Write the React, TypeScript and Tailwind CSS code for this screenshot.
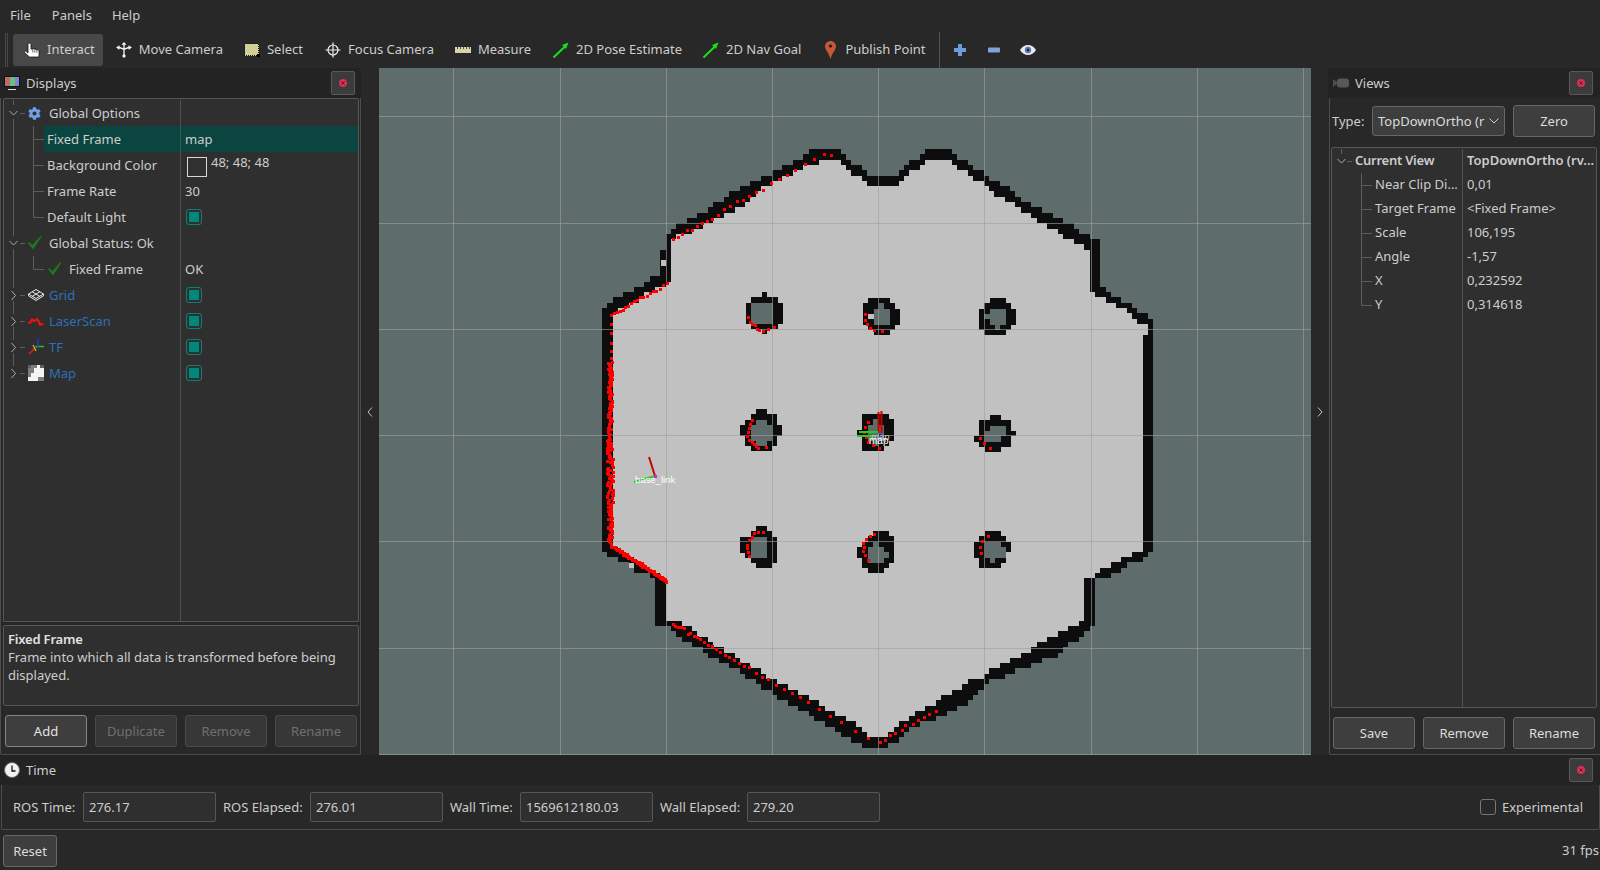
import type { ReactNode } from "react";
import { FaCog } from "react-icons/fa";

type P = [number, number];

// map outline traced from the occupancy grid
const OUTER: P[] = [
  [602, 552], [602, 313], [608, 303], [618, 297], [640, 287], [656, 276], [661, 276], [661, 250], [667, 250], [667, 234], [671, 228],
  [693, 218], [719, 202], [735, 191], [767, 175], [799, 160], [815, 149], [836, 149], [847, 160], [873, 176], [895, 176], [921, 154],
  [932, 149], [948, 149], [979, 170], [990, 181], [1011, 187], [1017, 197], [1038, 208], [1059, 218], [1070, 223], [1085, 234], [1096, 239], [1102, 245],
  [1102, 287], [1107, 293], [1117, 298], [1128, 303], [1133, 309], [1144, 314], [1155, 319],
  [1155, 547], [1149, 553], [1144, 558], [1133, 563], [1123, 568], [1117, 574], [1101, 579], [1096, 579], [1096, 622], [1090, 632],
  [1080, 637], [1059, 654], [1027, 668], [1006, 675], [984, 685], [968, 701], [953, 712], [921, 723], [905, 733], [894, 743], [883, 749],
  [868, 749], [857, 743], [846, 738], [841, 733], [820, 722], [804, 712], [793, 706], [777, 696], [767, 691], [751, 680], [735, 669],
  [714, 659], [703, 653], [698, 647], [687, 643], [676, 637], [671, 627], [661, 627], [655, 621], [655, 578], [640, 573], [623, 563], [613, 558],
];
const INNER: P[] = [
  [613, 543], [613, 315], [640, 298], [661, 287], [671, 282], [671, 239], [682, 235], [719, 217], [741, 207], [767, 186], [810, 165],
  [826, 160], [836, 160], [863, 181], [873, 186], [895, 186], [921, 165], [932, 160], [948, 160], [979, 181], [990, 192], [1011, 202],
  [1033, 218], [1053, 228], [1059, 234], [1070, 239], [1080, 245], [1086, 250], [1091, 250],
  [1091, 293], [1102, 298], [1112, 303], [1128, 313], [1133, 319], [1144, 324], [1149, 329], [1149, 335], [1144, 335], [1144, 548], [1112, 563], [1096, 574], [1085, 579], [1085, 622], [1059, 632], [1032, 648],
  [984, 675], [963, 685], [910, 717], [883, 738], [868, 738], [852, 722], [830, 712], [814, 701], [793, 691], [772, 680], [756, 669],
  [740, 659], [719, 648], [703, 637], [687, 627], [676, 621], [665, 621], [665, 578], [623, 553],
];

const OBSTACLES: { x: number; y: number; rows: string[] }[] = [
  { x: 746, y: 292, rows: ["...#...", ".#####.", "#gggg##", "#gggg##", "#gggg##", "#gggg##", ".#####.", "...#..."] },
  { x: 863, y: 298, rows: [".####..", "###g##.", "##ggg##", "#.ggg##", "##ggg##", ".#####.", "..###.."] },
  { x: 979, y: 298, rows: ["..###..", ".#####.", "##ggg##", "#gggg##", "##ggg##", "###g##.", ".####.."] },
  { x: 740, y: 409, rows: ["...##...", "..#####.", ".##gg##.", "##gggg##", "##gggg##", ".#gggg#.", ".##gg##.", "..####.."] },
  { x: 857, y: 414, rows: [".#####.", ".##g###", ".#ggg##", "##ggg##", ".#ggg##", ".##g##.", ".####.."] },
  { x: 974, y: 415, rows: ["...##...", ".######.", ".##ggg#.", ".#gggg##", "##ggg##.", ".######.", "..###..."] },
  { x: 740, y: 526, rows: ["...##..", "..####.", "##ggg##", "##ggg##", "##ggg##", ".#ggg##", "..#####", "...###."] },
  { x: 857, y: 531, rows: ["...###.", "..#####", ".##g###", "##ggg##", "##gggg#", ".#ggg##", ".#####.", "..###.."] },
  { x: 974, y: 531, rows: ["..###..", ".#####.", "##ggg##", "##gggg#", "##gggg.", ".##g##.", ".####.."] },
];

const CELL = 5.3;

function inside(poly: P[], x: number, y: number) {
  let hit = false;
  for (let i = 0, j = poly.length - 1; i < poly.length; j = i++) {
    const [xi, yi] = poly[i];
    const [xj, yj] = poly[j];
    if (yi > y !== yj > y && x < ((xj - xi) * (y - yi)) / (yj - yi) + xi) hit = !hit;
  }
  return hit;
}

// cell edges come from the index so neighbouring rows never leave a gap
function cell(ox: number, oy: number, i: number, j: number) {
  const l = Math.round(ox + i * CELL);
  const t = Math.round(oy + j * CELL);
  const w = Math.round(ox + (i + 1) * CELL) - l;
  const h = Math.round(oy + (j + 1) * CELL) - t;
  return `M${l} ${t}h${w}v${h}h-${w}z`;
}

function buildMap() {
  let light = "";
  let black = "";
  for (let j = 0; j < 115; j++) {
    for (let i = 0; i < 105; i++) {
      const cx = 602 + (i + 0.5) * CELL;
      const cy = 149 + (j + 0.5) * CELL;
      if (inside(INNER, cx, cy)) light += cell(602, 149, i, j);
      else if (inside(OUTER, cx, cy)) black += cell(602, 149, i, j);
    }
  }
  let holes = "";
  let rims = "";
  for (const o of OBSTACLES) {
    o.rows.forEach((row, r) => {
      row.split("").forEach((c, k) => {
        if (c === "#") rims += cell(o.x, o.y, k, r);
        if (c === "g") holes += cell(o.x, o.y, k, r);
      });
    });
  }
  return { light, black: black + rims, holes };
}

const MAP = buildMap();

// laser hits, read off 3x crops: [crop x, crop y, points]
const HITS: [number, number, number[]][] = [
  [590, 140, [250, 296, 265, 292, 277, 283, 292, 270, 307, 270, 322, 259, 337, 250, 352, 242, 367, 238, 385, 224, 403, 208, 421, 199, 441, 184, 459, 181, 478, 169, 499, 157, 519, 151, 544, 129, 568, 116, 592, 105, 616, 91, 645, 73, 673, 58, 702, 43, 723, 46, 231, 429, 220, 436, 210, 448, 198, 453, 189, 453, 180, 460, 170, 468, 160, 471, 151, 472, 142, 481, 132, 484, 123, 490, 114, 499, 105, 500, 99, 510, 89, 514, 80, 517, 72, 520, 64, 525, 64, 553, 62, 578, 64, 610, 64, 632, 64, 655, 475, 532, 479, 545, 487, 553, 495, 556, 500, 568, 508, 571, 519, 574, 535, 568, 553, 562]],
  [840, 140, [76, 522, 76, 540, 81, 553, 91, 565, 103, 571, 125, 574]],
  [590, 400, [487, 61, 480, 73, 477, 85, 475, 97, 472, 109, 477, 120, 485, 127, 492, 133, 498, 138, 503, 144, 527, 142, 835, 67, 826, 82, 823, 95, 828, 112, 835, 127, 848, 136, 868, 145, 519, 397, 503, 397, 492, 400, 485, 412, 477, 420, 472, 435, 470, 445, 473, 457, 478, 467, 853, 401, 841, 409, 829, 418, 820, 428, 823, 442, 820, 452, 824, 466, 835, 481]],
  [960, 400, [61, 115, 71, 130, 91, 145, 85, 409, 67, 424, 61, 440, 64, 458]],
  [640, 570, [100, 163, 106, 168, 115, 170, 123, 170, 132, 175, 145, 193, 151, 189, 162, 199, 171, 202, 181, 208, 193, 217, 205, 224, 216, 229, 229, 236, 241, 245, 256, 255, 268, 260, 283, 271, 298, 279, 313, 287, 328, 291, 349, 308, 367, 320, 385, 326, 409, 344, 432, 357, 457, 370, 481, 382, 505, 395, 538, 418, 571, 438, 604, 455, 646, 483, 685, 503]],
  [840, 540, [4, 545, 46, 573, 85, 593, 120, 607, 136, 600, 151, 586, 166, 578, 185, 571, 196, 556, 220, 553, 234, 541, 253, 532, 268, 522, 288, 514]],
];

// fixed noise so the scan looks the same on every load
function noise(i: number) {
  const s = Math.sin(i * 12.9898) * 43758.5453;
  return s - Math.floor(s);
}

function hitDots() {
  const out: P[] = [];
  for (const [ox, oy, pts] of HITS) {
    for (let i = 0; i < pts.length; i += 2) out.push([ox + pts[i] / 3, oy + pts[i + 1] / 3]);
  }
  // left wall and lower left corner are dense
  let n = 1;
  for (let y = 362; y < 545; y += 1.1) {
    const spread = y > 440 && y < 505 ? 7 : 4.5;
    out.push([610 + (noise(n++) - 0.5) * spread, y]);
  }
  for (let t = 0; t < 1; t += 0.012) {
    out.push([610 + t * 55.5 + noise(n++) * 1.5, 545 + t * 35 + noise(n++) * 3 - 1]);
  }
  return out;
}

const DOTS = hitDots();
const GRID_X = [453, 560, 666, 772, 878, 984, 1091, 1197, 1303];
const GRID_Y = [116, 223, 329, 435, 541, 648, 754];

function MapView() {
  return (
    <svg viewBox="379 68 932 687" className="block w-full h-full" shapeRendering="crispEdges">
      <rect x="379" y="68" width="932" height="687" fill="#5e6d6b" />
      <path d={MAP.light} fill="#c1c1c1" />
      <path d={MAP.black} fill="#0d0d0d" />
      <path d={MAP.holes} fill="#5e6d6b" />
      <rect x="661" y="260" width="5" height="6" fill="#c1c1c1" />
      <rect x="629" y="563" width="5" height="5" fill="#c1c1c1" />
      {GRID_X.map((x) => (
        <line key={x} x1={x + 0.5} x2={x + 0.5} y1="68" y2="755" stroke="#a0a0a0" strokeOpacity="0.62" />
      ))}
      {GRID_Y.map((y) => (
        <line key={y} y1={y + 0.5} y2={y + 0.5} x1="379" x2="1311" stroke="#a0a0a0" strokeOpacity="0.62" />
      ))}
      {DOTS.map(([x, y], i) => (
        <rect key={i} x={Math.round(x) - 1} y={Math.round(y) - 1} width="3" height="3" fill="#ff0000" />
      ))}
      <g shapeRendering="auto">
        <line x1="649" y1="457" x2="655" y2="476" stroke="#c80000" strokeWidth="2" />
        <line x1="655" y1="476" x2="634" y2="482" stroke="#1fd01f" strokeWidth="2" />
        <rect x="654" y="475" width="3" height="3" fill="#d020d0" />
        <text x="635" y="483" fontSize="9.5" fill="#fff" fontFamily="'Liberation Sans', sans-serif">base_link</text>
        <line x1="878.5" y1="412" x2="878.5" y2="433" stroke="#c80000" strokeWidth="2" />
        <line x1="881.5" y1="411" x2="881.5" y2="433" stroke="#c80000" strokeWidth="2" />
        <line x1="859" y1="432" x2="878" y2="432" stroke="#1fd01f" strokeWidth="2" />
        <line x1="857" y1="436" x2="876" y2="436" stroke="#1fd01f" strokeWidth="2" />
        <rect x="879" y="434" width="3" height="3" fill="#2020e0" />
        <text x="871" y="440" fontSize="9.5" fill="#c8c8c8" fontFamily="'Liberation Sans', sans-serif">map</text>
        <text x="869" y="444" fontSize="10" fill="#fff" fontFamily="'Liberation Sans', sans-serif">map</text>
      </g>
    </svg>
  );
}

function CloseButton() {
  return (
    <div className="w-6 h-6 flex items-center justify-center bg-[#3b3b3b] border border-[#595959] rounded-[2px]">
      <svg width="8" height="8" viewBox="0 0 8 8">
        <circle cx="4" cy="4" r="4" fill="#d9304f" />
        <path d="M2.4 2.4l3.2 3.2M5.6 2.4L2.4 5.6" stroke="#5b1d2a" strokeWidth="1" />
      </svg>
    </div>
  );
}

// Qt draws the label a pixel under the centre of its row
function Txt({ children, className }: { children: ReactNode; className?: string }) {
  return <span className={`pt-[2px] whitespace-nowrap ${className ?? ""}`}>{children}</span>;
}

function TitleBar({ icon, title, className }: { icon: ReactNode; title: string; className?: string }) {
  return (
    <div className={`h-[30px] shrink-0 flex items-center justify-between bg-[#232323] ${className ?? ""}`}>
      <div className="flex items-center">
        {icon}
        <Txt>{title}</Txt>
      </div>
      <div className="mr-[6px]">
        <CloseButton />
      </div>
    </div>
  );
}

function Btn({ children, disabled, w = "w-[82px]", strong }: { children: ReactNode; disabled?: boolean; w?: string; strong?: boolean }) {
  const look = disabled
    ? "bg-[#373737] border-[#4a4a4a] text-[#6f6f6f]"
    : strong
      ? "bg-[#3e3e3e] border-[#858585] text-[#e4e4e4]"
      : "bg-[#3e3e3e] border-[#676767] text-[#dcdcdc]";
  return (
    <div className={`${w} h-8 shrink-0 flex items-center justify-center border rounded-[3px] ${look}`}>
      <Txt>{children}</Txt>
    </div>
  );
}

function Check() {
  return (
    <div className="w-4 h-4 p-[2px] border border-[#0f7f73] rounded-[3px]">
      <div className="w-full h-full bg-[#00897b]" />
    </div>
  );
}

function TopGuide({ open, last, first }: { open?: boolean; last?: boolean; first?: boolean }) {
  return (
    <svg width="24" height="26" viewBox="0 0 24 26" className="shrink-0" fill="none" stroke="#5c5c5c">
      {!first && <path d="M9.5 0V6" />}
      {!last && <path d="M9.5 19V26" />}
      {first && <path d="M9.5 0V5" />}
      <path d="M16 13.5H21" />
      {open ? <path d="M5.5 11l4 4 4-4" stroke="#b0b0b0" /> : <path d="M7.500 9l4 4.500-4 4.500" stroke="#b0b0b0" />}
    </svg>
  );
}

function ChildGuide({ last }: { last?: boolean }) {
  return (
    <svg width="40" height="26" viewBox="0 0 40 26" className="shrink-0" fill="none" stroke="#5c5c5c">
      <path d="M9.5 0V26" />
      <path d={last ? "M29.5 0V13.5H40" : "M29.5 0V26M29.5 13.5H40"} />
    </svg>
  );
}

function Row({ left, right, active }: { left: ReactNode; right?: ReactNode; active?: boolean }) {
  return (
    <div className="flex h-[26px] shrink-0">
      <div className="w-[177px] shrink-0 flex items-center border-r border-[#505050] relative">
        {active && <div className="absolute inset-y-0 left-[40px] right-0 bg-[#0a4540]" />}
        <div className="relative flex items-center">{left}</div>
      </div>
      <div className={`flex-1 flex items-center pl-[4px] ${active ? "bg-[#0a4540]" : ""}`}>{right}</div>
    </div>
  );
}

const GreenTick = () => (
  <svg width="14" height="14" viewBox="0 0 14 14" className="shrink-0">
    <path d="M0 7l1.500-1 2.600 3.200L12.600 0l.9.6L5 13.500z" fill="#1f7a1f" />
  </svg>
);

const GridIcon = () => (
  <svg width="16" height="12" viewBox="0 0 16 12" fill="none" stroke="#ececec" className="shrink-0">
    <path d="M8 0.500l7.500 4.500L8 9.500 0.500 5z M4.200 2.800l7.500 4.500 M11.800 2.800l-7.500 4.500 M0.500 5v1.800L8 11.500l7.500-4.700V5" />
  </svg>
);
const LaserIcon = () => (
  <svg width="16" height="10" viewBox="0 0 16 10" fill="none" stroke="#f01010" strokeWidth="2.2" className="shrink-0">
    <path d="M0 7l2.500-.5 1.500-3 2.500 1.500 2.500-2 2 3 1 2.500 3.500-.5" />
  </svg>
);
const TfIcon = () => (
  <svg width="16" height="16" viewBox="0 0 16 16" fill="none" strokeWidth="1.400" className="shrink-0">
    <path d="M9 7L1 15" stroke="#ef1c1c" />
    <path d="M8 7.500h8" stroke="#28c828" />
    <path d="M10 0v8" stroke="#1c3ce0" />
    <path d="M5 6l3 6" stroke="#b0c020" />
  </svg>
);
const MapIcon = () => (
  <svg width="16" height="16" viewBox="0 0 16 16" shapeRendering="crispEdges" className="shrink-0">
    <rect width="16" height="16" fill="#7d7d7d" />
    <path d="M9 0h3v3H9z M6 3h10v5H6z M3 8h13v4H3z M0 12h10v4H0z" fill="#f4f4f4" />
    <path d="M0 0h3v3H0z M12 0h4v3h-4z" fill="#5f5f5f" />
  </svg>
);

function Displays() {
  const blue = "text-[#2d6fb8]";
  const check = (
    <div className="ml-[1px]">
      <Check />
    </div>
  );
  return (
    <div className="h-[524px] shrink-0 ml-[2px] mr-[1px] flex flex-col border border-[#565656] rounded-t-[2px] bg-[#2f2f2f] pt-[1px]">
      <Row
        left={
          <>
            <TopGuide open first />
            <FaCog className="w-[13px] h-[13px] text-[#6f9fe4] shrink-0" />
            <Txt className="ml-[8px]">Global Options</Txt>
          </>
        }
      />
      <Row active left={<><ChildGuide /><Txt className="ml-[3px]">Fixed Frame</Txt></>} right={<Txt>map</Txt>} />
      <Row
        left={<><ChildGuide /><Txt className="ml-[3px]">Background Color</Txt></>}
        right={
          <div className="flex items-start ml-[2px]">
            <div className="w-5 h-5 mt-[3px] border border-[#d8d8d8] bg-[#303030]" />
            <span className="ml-[4px] leading-4">48; 48; 48</span>
          </div>
        }
      />
      <Row left={<><ChildGuide /><Txt className="ml-[3px]">Frame Rate</Txt></>} right={<Txt>30</Txt>} />
      <Row left={<><ChildGuide last /><Txt className="ml-[3px]">Default Light</Txt></>} right={check} />
      <Row
        left={
          <>
            <TopGuide open />
            <GreenTick />
            <Txt className="ml-[7px]">Global Status: Ok</Txt>
          </>
        }
      />
      <Row left={<><ChildGuide last /><div className="ml-[4px]"><GreenTick /></div><Txt className="ml-[7px]">Fixed Frame</Txt></>} right={<Txt>OK</Txt>} />
      <Row left={<><TopGuide /><GridIcon /><Txt className={`ml-[5px] ${blue}`}>Grid</Txt></>} right={check} />
      <Row left={<><TopGuide /><LaserIcon /><Txt className={`ml-[5px] ${blue}`}>LaserScan</Txt></>} right={check} />
      <Row left={<><TopGuide /><TfIcon /><Txt className={`ml-[5px] ${blue}`}>TF</Txt></>} right={check} />
      <Row left={<><TopGuide last /><MapIcon /><Txt className={`ml-[5px] ${blue}`}>Map</Txt></>} right={check} />
      <div className="flex-1 flex">
        <div className="w-[177px] border-r border-[#505050]" />
      </div>
    </div>
  );
}

function LeftPanel() {
  return (
    <div className="w-[361px] shrink-0 flex flex-col">
      <TitleBar
        title="Displays"
        icon={
          <svg width="16" height="16" viewBox="0 0 16 16" className="mx-[4px] mr-[6px]" shapeRendering="crispEdges">
            <rect x="0" y="1" width="16" height="11" fill="#111" />
            <rect x="1" y="2" width="5" height="9" fill="#c06a6a" />
            <rect x="6" y="2" width="5" height="9" fill="#6fc07a" />
            <rect x="11" y="2" width="4" height="9" fill="#7a86d8" />
            <rect x="4" y="14" width="8" height="1" fill="#e0e0e0" />
          </svg>
        }
      />
      <div className="flex-1 flex flex-col border-x border-b border-[#4c4c4c] rounded-b-[2px]">
        <Displays />
        <div className="h-[81px] shrink-0 mt-[3px] ml-[2px] mr-[1px] px-[4px] pt-[4px] border border-[#565656] rounded-[2px] bg-[#2f2f2f] leading-[18px]">
          <div className="font-semibold tracking-[-0.2px] text-[#e2e2e2]">Fixed Frame</div>
          <div>Frame into which all data is transformed before being displayed.</div>
        </div>
        <div className="flex gap-2 ml-[4px] mt-[9px]">
          <Btn strong>Add</Btn>
          <Btn disabled>Duplicate</Btn>
          <Btn disabled>Remove</Btn>
          <Btn disabled>Rename</Btn>
        </div>
      </div>
    </div>
  );
}

function ViewRow({ left, right, last }: { left: string; right: string; last?: boolean }) {
  return (
    <div className="flex h-6 shrink-0">
      <div className="w-[131px] shrink-0 flex items-center border-r border-[#505050]">
        <svg width="43" height="24" viewBox="0 0 43 24" className="shrink-0" fill="none" stroke="#5c5c5c">
          <path d={last ? "M29.5 0V12.5H40" : "M29.5 0V24M29.5 12.5H40"} />
        </svg>
        <span className="whitespace-nowrap">{left}</span>
      </div>
      <div className="flex-1 flex items-center pl-[4px]">{right}</div>
    </div>
  );
}

function RightPanel() {
  return (
    <div className="w-[272px] shrink-0 flex flex-col">
      <TitleBar
        title="Views"
        className="pr-[1px]"
        icon={
          <svg width="16" height="10" viewBox="0 0 16 10" className="ml-[5px] mr-[6px]">
            <path d="M0 1l4 3V6L0 9z" fill="#4d4d4d" />
            <rect x="4" y="0.5" width="12" height="9" rx="3" fill="#585858" />
          </svg>
        }
      />
      <div className="flex-1 flex flex-col ml-[1px] border-l border-b border-[#4c4c4c] rounded-bl-[2px]">
        <div className="flex items-center h-[49px] shrink-0 pl-[2px] pb-[3px]">
          <Txt className="w-10 shrink-0">Type:</Txt>
          <div className="w-[133px] h-[30px] shrink-0 flex items-center justify-between pl-[5px] pr-[5px] bg-[#3e3e3e] border border-[#676767] rounded-[3px] text-[#dcdcdc]">
            <Txt>TopDownOrtho (r</Txt>
            <svg width="10" height="6" viewBox="0 0 10 6" fill="none" stroke="#cfcfcf">
              <path d="M0.5 0.5L5 5l4.5-4.5" />
            </svg>
          </div>
          <div className="ml-2">
            <Btn>Zero</Btn>
          </div>
        </div>
        <div className="h-[561px] shrink-0 ml-[1px] mr-[3px] flex flex-col border border-[#565656] rounded-[2px] bg-[#2f2f2f]">
          <div className="flex h-6 shrink-0 mt-[1px]">
            <div className="w-[131px] shrink-0 flex items-center border-r border-[#505050]">
              <svg width="23" height="24" viewBox="0 0 23 24" className="shrink-0" fill="none">
                <path d="M9.5 0V5" stroke="#5c5c5c" />
                <path d="M5.5 10l4 4 4-4" stroke="#b0b0b0" />
                <path d="M15 12.5H20" stroke="#5c5c5c" />
              </svg>
              <span className="font-semibold tracking-[-0.25px] whitespace-nowrap">Current View</span>
            </div>
            <div className="flex-1 flex items-center pl-[4px] font-semibold whitespace-nowrap">TopDownOrtho (rv...</div>
          </div>
          <ViewRow left="Near Clip Di..." right="0,01" />
          <ViewRow left="Target Frame" right="<Fixed Frame>" />
          <ViewRow left="Scale" right="106,195" />
          <ViewRow left="Angle" right="-1,57" />
          <ViewRow left="X" right="0,232592" />
          <ViewRow left="Y" right="0,314618" last />
          <div className="flex-1 flex">
            <div className="w-[131px] border-r border-[#505050]" />
          </div>
        </div>
        <div className="flex gap-2 ml-[3px] mt-[9px]">
          <Btn>Save</Btn>
          <Btn>Remove</Btn>
          <Btn>Rename</Btn>
        </div>
      </div>
    </div>
  );
}

function Tool({ icon, label, active, className }: { icon: ReactNode; label: string; active?: boolean; className?: string }) {
  return (
    <div className={`h-8 flex items-center gap-[7px] pl-[11px] pr-2 rounded-[3px] ${active ? "bg-[#484848]" : ""} ${className ?? ""}`}>
      <div className="w-4 h-4 flex items-center justify-center">{icon}</div>
      <span>{label}</span>
    </div>
  );
}

const GreenArrow = () => (
  <svg width="16" height="16" viewBox="0 0 16 16" fill="none">
    <path d="M0.500 15.500L12 4.500" stroke="#19e019" strokeWidth="2" />
    <path d="M15.500 0.500L9 3l4 4z" fill="#19e019" />
  </svg>
);

function Toolbar() {
  return (
    <div className="h-9 shrink-0 flex items-center">
      <div className="w-[13px] shrink-0 self-stretch flex justify-start pl-[5px] gap-[1px] py-[1px]">
        <div className="w-px bg-[#4a4a4a]" />
        <div className="w-px bg-[#4a4a4a]" />
      </div>
      <div className="flex items-center gap-[2px]">
        <Tool
          active
          label="Interact"
          icon={
            <svg width="16" height="16" viewBox="0 0 16 16">
              <path d="M4 2.500a1.500 1.500 0 013 0V7h1.800v-.5h2v.7h2v.6h1.200c.6 0 1 .4 1 1V15H5.500L.5 10.500c-.5-1 .5-2 1.500-1.200L4 11z" fill="#fff" stroke="#151515" strokeWidth="0.8" />
              <path d="M8.800 7v3.500M10.800 7.200v3.500M12.800 7.800v3" stroke="#444" strokeWidth="0.8" />
            </svg>
          }
        />
        <Tool
          label="Move Camera"
          icon={
            <svg width="16" height="16" viewBox="0 0 16 16" fill="#f4f4f4" stroke="none">
              <path d="M8 1v13M3 5.500c1.800 0 2.500 1.500 5 1.500s3.200-1.500 5-1.500" fill="none" stroke="#f4f4f4" strokeWidth="1.300" />
              <path d="M8 0l2.500 2.800h-5z M0 5.500L3.500 3.200v4.600z M16 5.500l-3.500-2.300v4.600z M8 16l-2-2 2-2 2 2z" />
            </svg>
          }
        />
        <Tool
          label="Select"
          icon={
            <svg width="16" height="16" viewBox="0 0 16 16" shapeRendering="crispEdges">
              <rect x="0.500" y="1.500" width="14" height="12" fill="#d2cf96" stroke="#161616" strokeDasharray="1 1" />
              <path d="M13 12h3v3h-3z" fill="#000" />
            </svg>
          }
        />
        <Tool
          label="Focus Camera"
          className="ml-[1px]"
          icon={
            <svg width="16" height="16" viewBox="0 0 16 16" fill="none" stroke="#eee" strokeWidth="1.200">
              <circle cx="8" cy="8" r="5" />
              <path d="M8 0.500v15M0.500 8h15" />
            </svg>
          }
        />
        <Tool
          label="Measure"
          icon={
            <svg width="16" height="8" viewBox="0 0 16 8" shapeRendering="crispEdges">
              <rect width="16" height="6" y="1" fill="#d8d3a8" />
              <path d="M2 1h1v2H2zM5 1h1v2H5zM8 1h1v2H8zM11 1h1v2h-1zM14 1h1v2h-1z" fill="#555" />
            </svg>
          }
        />
        <Tool label="2D Pose Estimate" className="ml-[1px]" icon={<GreenArrow />} />
        <Tool label="2D Nav Goal" icon={<GreenArrow />} />
        <Tool
          label="Publish Point"
          icon={
            <svg width="11" height="18" viewBox="0 0 11 18">
              <path d="M5.500 0C2.400 0 0 2.400 0 5.500 0 9 4 12 5.500 18 7 12 11 9 11 5.500 11 2.400 8.600 0 5.500 0z" fill="#c4583a" />
              <circle cx="5.500" cy="5" r="1.600" fill="#2a1510" />
            </svg>
          }
        />
      </div>
      <div className="w-px h-[36px] bg-[#555] ml-[5px] mr-[3px]" />
      <div className="flex items-center">
        <div className="w-[34px] flex justify-center">
          <svg width="14" height="14" viewBox="0 0 14 14">
            <path d="M5 1h4v4h4v4H9v4H5V9H1V5h4z" fill="#6e9bdc" />
          </svg>
        </div>
        <div className="w-[34px] flex justify-center">
          <svg width="12" height="6" viewBox="0 0 12 6">
            <rect width="12" height="5" y="0.5" rx="1" fill="#7fa3d8" />
          </svg>
        </div>
        <div className="w-[34px] flex justify-center">
          <svg width="16" height="10" viewBox="0 0 16 10">
            <path d="M0 5c2-3.500 5-5 8-5s6 1.500 8 5c-2 3.500-5 5-8 5S2 8.500 0 5z" fill="#e8e8e8" />
            <circle cx="8" cy="5" r="3.200" fill="#5878b8" />
            <circle cx="8" cy="5" r="1.200" fill="#15203a" />
          </svg>
        </div>
      </div>
    </div>
  );
}

function TimeField({ label, value, labelW }: { label: string; value: string; labelW: string }) {
  return (
    <>
      <Txt className={`${labelW} shrink-0`}>{label}</Txt>
      <div className="w-[133px] h-[30px] shrink-0 flex items-center pl-[5px] bg-[#2f2f2f] border border-[#565656] rounded-[2px]">
        <Txt>{value}</Txt>
      </div>
    </>
  );
}

function TimePanel() {
  return (
    <div className="h-[75px] shrink-0 flex flex-col">
      <TitleBar
        title="Time"
        className="pr-[1px]"
        icon={
          <svg width="16" height="16" viewBox="0 0 16 16" className="ml-[4px] mr-[6px]">
            <circle cx="8" cy="8" r="7.500" fill="#f2f2f2" stroke="#6a6a6a" />
            <path d="M8 3.500V9h3.500" fill="none" stroke="#111" strokeWidth="1.300" />
          </svg>
        }
      />
      <div className="flex-1 flex items-center gap-[7px] pl-[11px] border-x border-b border-[#4c4c4c] rounded-b-[2px] ml-px">
        <TimeField label="ROS Time:" value="276.17" labelW="w-[63px]" />
        <TimeField label="ROS Elapsed:" value="276.01" labelW="w-[80px]" />
        <TimeField label="Wall Time:" value="1569612180.03" labelW="w-[63px]" />
        <TimeField label="Wall Elapsed:" value="279.20" labelW="w-[80px]" />
        <div className="ml-auto flex items-center gap-[6px] pr-[16px]">
          <div className="w-4 h-4 border border-[#767676] rounded-[3px]" />
          <Txt>Experimental</Txt>
        </div>
      </div>
    </div>
  );
}

export default function App() {
  return (
    <div className="w-[1600px] h-[870px] overflow-hidden flex flex-col bg-[#282828] text-[#cdcdcd] text-[13px] font-['Noto_Sans',sans-serif]">
      <div className="h-8 shrink-0 flex items-center gap-5 pl-[10px]">
        <span>File</span>
        <span className="ml-[1px]">Panels</span>
        <span>Help</span>
      </div>
      <Toolbar />
      <div className="h-[687px] shrink-0 flex">
        <LeftPanel />
        <div className="w-[18px] shrink-0 flex items-center justify-center">
          <svg width="6" height="10" viewBox="0 0 6 10" fill="none" stroke="#c4c4c4">
            <path d="M5 0.500L1 5l4 4.500" />
          </svg>
        </div>
        <div className="w-[932px] shrink-0">
          <MapView />
        </div>
        <div className="w-[17px] shrink-0 flex items-center justify-center">
          <svg width="6" height="10" viewBox="0 0 6 10" fill="none" stroke="#c4c4c4">
            <path d="M1 0.500L5 5 1 9.500" />
          </svg>
        </div>
        <RightPanel />
      </div>
      <TimePanel />
      <div className="flex-1 flex items-center justify-between pl-[3px] pr-[1px] pt-[2px]">
        <Btn w="w-[54px]">Reset</Btn>
        <span>31 fps</span>
      </div>
    </div>
  );
}
